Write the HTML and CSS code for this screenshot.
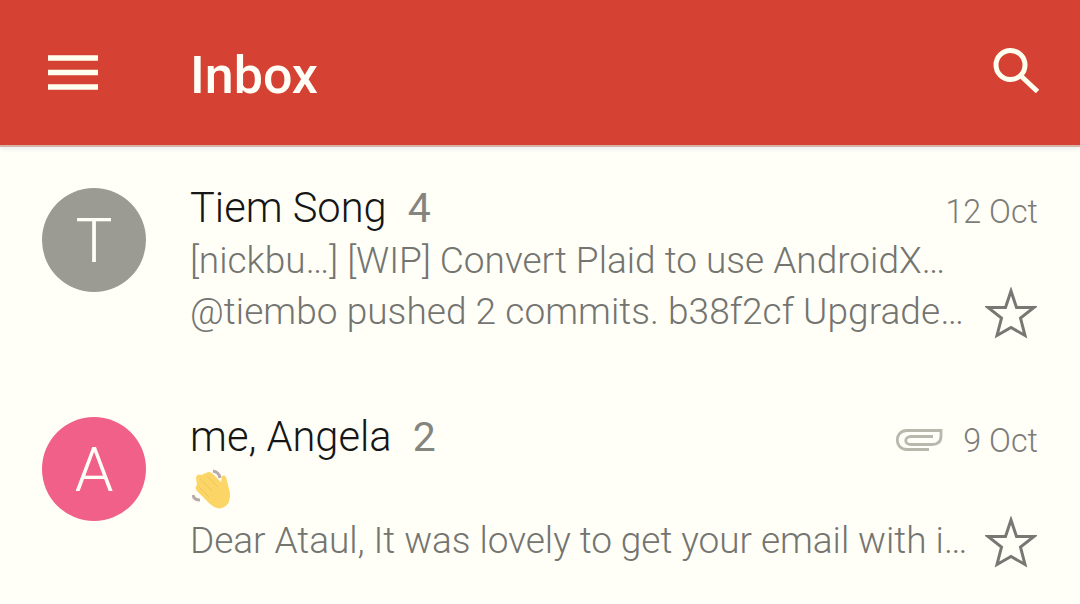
FILE: index.html
```html
<!DOCTYPE html>
<html lang="en">
<head>
<meta charset="utf-8">
<title>Inbox</title>
<link rel="stylesheet" href="styles.css">
</head>
<body>
<header class="bar">
  <svg class="menu" viewBox="0 0 50 36"><path d="M0 3h50M0 17.500h50M0 32h50"/></svg>
  <h1 class="title">Inbox</h1>
  <svg class="search" viewBox="0 0 48 48"><circle cx="18.500" cy="18" r="14.500"/><path d="M29 29L45.500 44.500"/></svg>
</header>
<main class="list">
  <article class="mail">
    <div class="avatar avatar-gray">T</div>
    <div class="content">
      <div class="row head"><span class="sender">Tiem Song</span><span class="count">4</span><span class="date">12 Oct</span></div>
      <div class="row line subject">[nickbu…] [WIP] Convert Plaid to use AndroidX…</div>
      <div class="row line"><span class="snippet snippet-wide">@tiembo pushed 2 commits. b38f2cf Upgrade…</span>
        <svg class="star" viewBox="0 0 52 52"><path d="M26 4L31.500 20.500H49L35.500 31L40 48.500L26 40.500L12 48.500L16.500 31L3 20.500H20.500Z"/></svg>
      </div>
    </div>
  </article>
  <article class="mail">
    <div class="avatar avatar-pink">A</div>
    <div class="content">
      <div class="row head"><span class="sender">me, Angela</span><span class="count">2</span>
        <svg class="clip" viewBox="0 0 48 24"><path d="M34 21.500H12C-1 21.500-1 2.500 12 2.500H46V8C46 14 43 16.500 37 16.500H16C9 16.500 9 8.500 16 8.500H38"/></svg>
        <span class="date">9 Oct</span></div>
      <div class="row line">
        <svg class="wave" viewBox="0 0 40 42"><path class="hand" d="M4 9Q5 4 9 6L14 4Q18 1 22 6L29 13L30 7Q34 5 35 12L38 24Q39 36 30 39Q24 41 17 34L5 22Q2 18 5 16Z"/><path class="fingers" d="M8 10L20 22M15 7L26 18M7 18L17 28"/><path class="motion" d="M21 2Q27 3 28 9M1 26Q2 31 8 31"/></svg>
      </div>
      <div class="row line"><span class="snippet">Dear Ataul, It was lovely to get your email with i…</span>
        <svg class="star" viewBox="0 0 52 52"><path d="M26 4L31.500 20.500H49L35.500 31L40 48.500L26 40.500L12 48.500L16.500 31L3 20.500H20.500Z"/></svg>
      </div>
    </div>
  </article>
</main>
</body>
</html>
```
FILE: styles.css
```css
* { box-sizing: border-box; }
body {
  margin: 0;
  height: 604px;
  overflow: hidden;
  background: #fffff8;
  font-family: Roboto, "Liberation Sans", sans-serif;
  font-weight: 300;
}
svg { fill: none; flex: none; }
.bar {
  display: flex;
  align-items: center;
  height: 147px;
  padding: 0 40px 0 48px;
  background: #d54132;
  border-bottom: 2px solid #d3b4a6;
  box-shadow: 0 2px 5px #e9edec;
}
.menu { width: 50px; height: 36px; stroke: #fffff0; stroke-width: 5.500; }
.title {
  flex: 1;
  margin: 7px 0 0 92px;
  color: #fffff8;
  font-size: 52px;
  font-weight: 500;
  line-height: 60px;
}
.search { width: 48px; height: 48px; margin-top: -3px; stroke: #fffff0; stroke-width: 5; }
.list { padding-top: 35px; }
.mail {
  display: flex;
  gap: 44px;
  height: 229px;
  padding: 0 40px 0 42px;
}
.mail:last-child { height: 193px; }
.avatar {
  flex: none;
  width: 104px;
  height: 104px;
  margin-top: 6px;
  border-radius: 50%;
  color: #fffff8;
  font-size: 62px;
  line-height: 106px;
  text-align: center;
}
.avatar-gray { background: #9b9b93; }
.avatar-pink { background: #f06089; }
.content { flex: 1; min-width: 0; }
.row { display: flex; align-items: center; white-space: nowrap; }
.head { height: 53px; }
.line { height: 51px; color: #747470; font-size: 37px; }
.snippet { letter-spacing: -0.04px; }
.snippet-wide { letter-spacing: 0.050px; }
.sender { margin-top: -2px; color: #161616; font-size: 41.600px; }
.count { margin: -2px 0 0 21px; color: #858580; font-size: 41px; font-weight: 400; }
.date { margin: 6px 2px 0 auto; color: #7c7c78; font-size: 32.300px; }
.clip { width: 48px; height: 24px; margin: 5px 0 0 auto; stroke: #b8b8ac; stroke-width: 2.800; }
.clip + .date { margin-left: 20px; }
.star { width: 52px; height: 52px; margin: 2px 3px 0 auto; stroke: #777773; stroke-width: 3; }
.wave { width: 40px; height: 42px; margin-left: 2px; }
.hand { fill: #fbd566; }
.fingers { stroke: #edc45e; stroke-width: 1; }
.motion { stroke: #b8aaa8; stroke-width: 3; }
```
